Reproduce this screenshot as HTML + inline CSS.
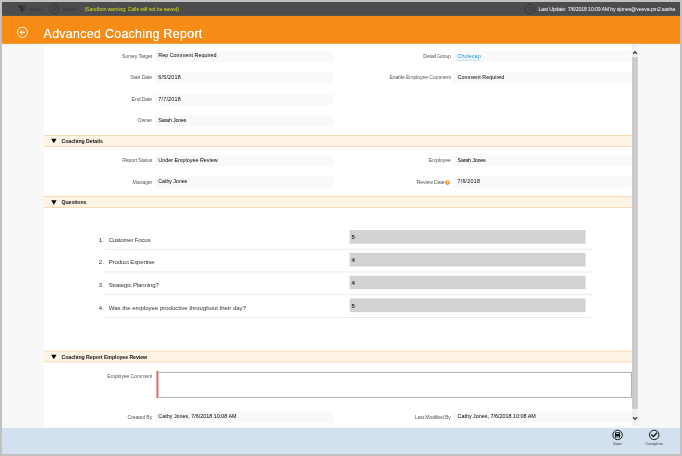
<!DOCTYPE html>
<html><head><meta charset="utf-8"><title>Advanced Coaching Report</title>
<style>
*{box-sizing:border-box;margin:0;padding:0}
html,body{width:682px;height:456px;overflow:hidden;background:#c1c1c1;font-family:"Liberation Sans",sans-serif;}
.a{position:absolute}
#root{left:0;top:0;width:682px;height:456px;will-change:transform}
#title{left:43.6px;top:27px;font-size:12.3px;letter-spacing:0.36px;color:#fff;white-space:nowrap;line-height:14px;text-shadow:0 0 0.3px #fff}
.t{position:absolute;white-space:nowrap;font-size:5.3px;line-height:7px;color:#222;letter-spacing:-0.1px}
.lbl{position:absolute;white-space:nowrap;font-size:5.2px;line-height:7px;color:#5a5a5a;text-align:right;letter-spacing:-0.14px}
.v{position:absolute;font-size:5.4px;line-height:7px;color:#000;white-space:nowrap}
.vL{left:158.3px}.vR{left:457.5px}
.lL{right:529.9px}.lR{right:231.2px}
.sec{position:absolute;left:61.5px;font-size:5.2px;font-weight:bold;color:#111;line-height:7px;white-space:nowrap;letter-spacing:-0.05px}
.q{position:absolute;font-size:6.05px;line-height:8px;color:#333;white-space:nowrap}
.qd{position:absolute;left:351.5px;font-size:6px;font-weight:bold;line-height:8px;color:#222}
.link{color:#1c96d4;font-size:5.5px}
</style></head><body>
<div id="root" class="a">

<svg class="a" style="left:0;top:0" width="682" height="456" viewBox="0 0 682 456" fill="none">
<rect x="2" y="2" width="678" height="14" fill="#4c4c4c"/>
<rect x="2" y="15.9" width="678" height="28.05" fill="#f68b16"/>
<rect x="2" y="43.9" width="678" height="384.1" fill="#f8f8f8"/>
<rect x="43.9" y="43.9" width="588.1" height="382.1" fill="#fff"/>
<rect x="632" y="43.9" width="5.8" height="381.9" fill="#f0f0f0"/>
<rect x="632" y="57.1" width="5.8" height="351.7" fill="#cacaca"/>
<rect x="2" y="428" width="678" height="26" fill="#d3e0f0"/>
<rect x="155" y="51" width="178.2" height="11" fill="#f9f9f9"/>
<rect x="155" y="72.4" width="178.2" height="11" fill="#f9f9f9"/>
<rect x="155" y="93.9" width="178.2" height="11" fill="#f9f9f9"/>
<rect x="155" y="115.5" width="178.2" height="11" fill="#f9f9f9"/>
<rect x="155" y="155.2" width="178.2" height="11" fill="#f9f9f9"/>
<rect x="155" y="176.7" width="178.2" height="11" fill="#f9f9f9"/>
<rect x="155" y="411.8" width="178.2" height="11" fill="#f9f9f9"/>
<rect x="453.4" y="51" width="178.2" height="11" fill="#f9f9f9"/>
<rect x="453.4" y="72.4" width="178.2" height="11" fill="#f9f9f9"/>
<rect x="453.4" y="155.2" width="178.2" height="11" fill="#f9f9f9"/>
<rect x="453.4" y="176.7" width="178.2" height="11" fill="#f9f9f9"/>
<rect x="453.4" y="411.8" width="178.2" height="11" fill="#f9f9f9"/>
<rect x="43.9" y="135" width="588.1" height="12" fill="#fcd9b5"/>
<rect x="43.9" y="136" width="588.1" height="10" fill="#fef4e6"/>
<rect x="43.9" y="196" width="588.1" height="12" fill="#fcd9b5"/>
<rect x="43.9" y="197" width="588.1" height="10" fill="#fef4e6"/>
<rect x="43.9" y="350.6" width="588.1" height="11.8" fill="#fcd9b5"/>
<rect x="43.9" y="351.6" width="588.1" height="9.8" fill="#fef4e6"/>
<rect x="349.6" y="230.1" width="236" height="13.6" fill="#d2d2d2"/>
<rect x="104.5" y="248.8" width="487.8" height="0.8" fill="#e6e6e6"/>
<rect x="349.6" y="252.9" width="236" height="13.6" fill="#d2d2d2"/>
<rect x="104.5" y="271.55" width="487.8" height="0.8" fill="#e6e6e6"/>
<rect x="349.6" y="275.7" width="236" height="13.6" fill="#d2d2d2"/>
<rect x="104.5" y="294.3" width="487.8" height="0.8" fill="#e6e6e6"/>
<rect x="349.6" y="298.5" width="236" height="13.6" fill="#d2d2d2"/>
<rect x="104.5" y="317.05" width="487.8" height="0.8" fill="#e6e6e6"/>
<rect x="157.6" y="371.9" width="474.3" height="25.9" fill="#a9a9a9"/>
<rect x="158.4" y="372.8" width="472.6" height="24.1" fill="#fff"/>
<rect x="156.4" y="370.9" width="1.8" height="27.2" fill="#f16666"/>
<rect x="457.3" y="59.7" width="23" height="0.7" fill="#9fd2ed"/>
<path d="M18.3 5.3 L26.1 5.3 L22.2 12.5 Z" fill="#3f3f3f"/>
<path d="M18.3 5.3 L20.9 5.3 L23.1 9.5 L22.2 12.5 Z" fill="#2e2e2e"/>
<path d="M25.7 5.6 L22.4 11.8" stroke="#303030" stroke-width="0.7"/>
<circle cx="54.3" cy="9" r="4.7" stroke="#353535" stroke-width="0.8"/>
<circle cx="55.2" cy="8.1" r="1.7" stroke="#353535" stroke-width="0.7"/>
<path d="M54 9.4 L52.1 11.3" stroke="#353535" stroke-width="0.9"/>
<circle cx="529.9" cy="9" r="4.7" stroke="#333" stroke-width="0.9"/>
<circle cx="529.9" cy="9" r="1.8" stroke="#363636" stroke-width="0.7" stroke-dasharray="4.2 1.4"/>
<circle cx="22.4" cy="32.3" r="5.05" stroke="#fff" stroke-width="0.9"/>
<path d="M24.9 32.3 H21" stroke="#fff" stroke-width="1.2"/>
<path d="M19.2 32.3 L22.1 29.9 V34.7 Z" fill="#fff"/>
<path d="M633.1 53.9 L635 51.8 L636.9 53.9" stroke="#3a3a3a" stroke-width="1.3"/>
<path d="M633.1 417.3 L635 419.4 L636.9 417.3" stroke="#3a3a3a" stroke-width="1.3"/>
<path d="M51.2 138.7 H56.6 L53.9 143.2 Z M51.2 200.2 H56.6 L53.9 204.7 Z M51.2 354.7 H56.6 L53.9 359.2 Z" fill="#000"/>
<circle cx="447.5" cy="182.6" r="2.3" fill="#f68b16"/>
<text x="446.55" y="183.9" font-size="3.6" font-weight="bold" fill="#fff" font-family="Liberation Sans, sans-serif">?</text>
<circle cx="617.6" cy="434.95" r="4.75" stroke="#111" stroke-width="0.95"/>
<rect x="615" y="432.3" width="5.1" height="5.5" rx="0.5" fill="#111"/>
<rect x="616" y="433.1" width="3.1" height="0.9" fill="#c4d0df"/>
<rect x="616.3" y="436.2" width="2.5" height="1.6" fill="#d3e0f0"/>
<rect x="616.8" y="436.6" width="0.7" height="1" fill="#333"/>
<circle cx="654.2" cy="434.95" r="4.75" stroke="#111" stroke-width="0.95"/>
<path d="M651.3 434.5 L653.4 436.5 L657 432.7" stroke="#111" stroke-width="1.3"/>
</svg>
<div id="title" class="a">Advanced Coaching Report</div>
<div class="lbl lL" style="top:53px">Survey Target</div><div class="v vL" style="top:52px">Rep Comment Required</div>
<div class="lbl lL" style="top:74px">Start Date</div><div class="v vL" style="top:74px;letter-spacing:0.2px">6/5/2018</div>
<div class="lbl lL" style="top:96px">End Date</div><div class="v vL" style="top:96px;letter-spacing:0.2px">7/7/2018</div>
<div class="lbl lL" style="top:117px">Owner</div><div class="v vL" style="top:117px;letter-spacing:-0.2px">Sarah Jones</div>
<div class="lbl lL" style="top:157px">Report Status</div><div class="v vL" style="top:157px">Under Employee Review</div>
<div class="lbl lL" style="top:179px">Manager</div><div class="v vL" style="top:178px;letter-spacing:-0.1px">Cathy Jones</div>
<div class="lbl lL" style="top:414px">Created By</div><div class="v vL" style="top:413px">Cathy Jones, 7/6/2018 10:08 AM</div>
<div class="lbl lR" style="top:53px">Detail Group</div><div class="v vR link" style="top:53px">Cholecap</div>
<div class="lbl lR" style="top:74px">Enable Employee Comment</div><div class="v vR" style="top:74px">Comment Required</div>
<div class="lbl lR" style="top:157px">Employee</div><div class="v vR" style="top:157px;letter-spacing:-0.2px">Sarah Jones</div>
<div class="lbl lR" style="right:237.5px;top:179px">Review Date</div><div class="v vR" style="top:178px;letter-spacing:0.2px">7/6/2018</div>
<div class="lbl lR" style="top:414px">Last Modified By</div><div class="v vR" style="top:413px">Cathy Jones, 7/6/2018 10:08 AM</div>
<div class="sec" style="top:138px">Coaching Details</div>
<div class="sec" style="top:199px">Questions</div>
<div class="sec" style="top:354px">Coaching Report Employee Review</div>
<div class="q" style="left:98.8px;top:236px">1.</div><div class="q" style="left:108.7px;top:236px;letter-spacing:-0.2px">Customer Focus</div><div class="qd" style="top:233px">5</div>
<div class="q" style="left:98.8px;top:258px">2.</div><div class="q" style="left:108.7px;top:258px;letter-spacing:-0.12px">Product Expertise</div><div class="qd" style="top:256px">4</div>
<div class="q" style="left:98.8px;top:281px">3.</div><div class="q" style="left:108.7px;top:281px;letter-spacing:-0.13px">Strategic Planning?</div><div class="qd" style="top:279px">4</div>
<div class="q" style="left:98.8px;top:304px">4.</div><div class="q" style="left:108.7px;top:304px;letter-spacing:-0.02px">Was the employee productive throughout their day?</div><div class="qd" style="top:302px">5</div>
<div class="lbl lL" style="top:373px">Employee Comment</div>
<div class="t" style="left:29.2px;top:5.6px;color:#383838;letter-spacing:-0.3px">Menu</div>
<div class="t" style="left:62.5px;top:5.6px;color:#383838;letter-spacing:-0.45px">Search</div>
<div class="t" style="left:84.4px;top:5.6px;color:#d9de22;letter-spacing:-0.125px">(Sandbox warning: Calls will not be saved)</div>
<div class="t" style="left:538.6px;top:5.6px;color:#fff;letter-spacing:-0.185px">Last Update: 7/6/2018 10:09 AM by sjones@veeva.pm2.sasha</div>
<div class="t" style="left:613.1px;top:440px;font-size:4.2px;color:#444;letter-spacing:-0.25px">Save</div>
<div class="t" style="left:645.2px;top:440px;font-size:4.2px;color:#444;letter-spacing:0">Complete</div>
</div>
</body></html>
